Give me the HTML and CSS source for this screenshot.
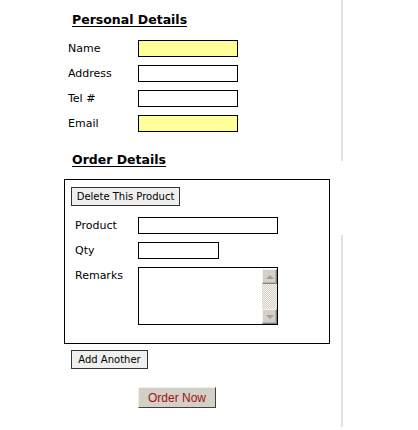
FILE: index.html
```html
<!DOCTYPE html>
<html>
<head>
<meta charset="utf-8">
<link rel="stylesheet" href="styles.css">
</head>
<body>
<div class="page">
  <main class="content">
    <h2 class="heading">Personal Details</h2>
    <div class="rows personal-rows">
      <div class="row"><label class="lbl">Name</label><input class="field req" type="text"></div>
      <div class="row"><label class="lbl">Address</label><input class="field" type="text"></div>
      <div class="row"><label class="lbl">Tel #</label><input class="field" type="text"></div>
      <div class="row"><label class="lbl">Email</label><input class="field req" type="text"></div>
    </div>

    <h2 class="heading order-heading">Order Details</h2>
    <div class="product-box">
      <button class="btn del-btn" type="button">Delete This Product</button>
      <div class="rows product-rows">
        <div class="row"><label class="lbl lbl-p">Product</label><input class="field wide" type="text"></div>
        <div class="row"><label class="lbl lbl-p">Qty</label><input class="field qty" type="text"></div>
        <div class="row row-top"><label class="lbl lbl-p lbl-top">Remarks</label>
          <div class="memo">
            <textarea class="memo-text"></textarea>
            <div class="sbar">
              <span class="sbtn"><span class="arr up"></span></span>
              <span class="strack"></span>
              <span class="sbtn"><span class="arr down"></span></span>
            </div>
          </div>
        </div>
      </div>
    </div>
    <button class="btn add-btn" type="button">Add Another</button>
    <div class="submit-row"><button class="order-btn" type="button">Order Now</button></div>
  </main>
  <div class="rule"><span class="seg seg-top"></span><span class="seg seg-bottom"></span></div>
</div>
</body>
</html>
```

FILE: styles.css
```css
html, body {
  margin: 0;
  padding: 0;
  background: #ffffff;
}
body {
  font-family: "DejaVu Sans", Verdana, sans-serif;
  font-size: 11px;
  color: #000;
}
.page {
  display: flex;
  width: 418px;
  height: 430px;
}
.content {
  width: 341px;
  padding-left: 64px;
  box-sizing: border-box;
  display: flex;
  flex-direction: column;
  align-items: flex-start;
}
.heading {
  margin: 12px 0 0 8px;
  font-size: 12.5px;
  line-height: 16px;
  font-weight: bold;
  text-decoration: underline;
  text-underline-offset: 2px;
}
.order-heading {
  margin-top: 20px;
}
.rows {
  display: flex;
  flex-direction: column;
  gap: 8px;
}
.personal-rows {
  margin: 12px 0 0 4px;
}
.row {
  display: flex;
  align-items: center;
  height: 17px;
}
.row-top {
  align-items: flex-start;
  height: auto;
}
.lbl {
  width: 70px;
  line-height: 14px;
}
.lbl-p {
  width: 63px;
  margin-left: 4px;
}
.lbl-top {
  padding-top: 2px;
}
.field {
  width: 100px;
  height: 17px;
  box-sizing: border-box;
  border: 1px solid #000;
  background: #fff;
  margin: 0;
  padding: 0 2px;
  font: inherit;
  outline: none;
}
.field.req {
  background: #ffff99;
}
.field.wide {
  width: 140px;
}
.field.qty {
  width: 81px;
}
.product-box {
  margin-top: 11px;
  width: 266px;
  height: 165px;
  box-sizing: border-box;
  border: 1px solid #000;
  padding: 7px 0 0 6px;
}
.btn {
  height: 19px;
  box-sizing: border-box;
  border: 1px solid #333;
  background: #efefef;
  font-family: "DejaVu Sans", Verdana, sans-serif;
  font-size: 10px;
  color: #000;
  padding: 0 4px;
  margin: 0;
  line-height: 17px;
}
.del-btn {
  width: 109px;
  padding: 0;
}
.product-rows {
  margin-top: 11px;
}
.memo {
  width: 140px;
  height: 58px;
  box-sizing: border-box;
  border: 1px solid #000;
  display: flex;
  background: #fff;
}
.memo-text {
  flex: 1;
  border: none;
  margin: 0;
  padding: 0;
  resize: none;
  outline: none;
  overflow: hidden;
  background: #fff;
}
.sbar {
  width: 15px;
  display: flex;
  flex-direction: column;
  margin-top: 1px;
}
.sbtn {
  height: 15px;
  box-sizing: border-box;
  background: #d4d0c8;
  border-top: 1px solid #f4f3ee;
  border-left: 1px solid #f4f3ee;
  border-right: 1px solid #808080;
  border-bottom: 1px solid #808080;
  box-shadow: inset -1px -1px 0 #b8b4ac;
  display: flex;
  align-items: center;
  justify-content: center;
}
.strack {
  flex: 1;
  background-color: #f4f3ee;
  background-image: repeating-conic-gradient(#d4d0c8 0 25%, #f4f3ee 0 50%);
  background-size: 2px 2px;
}
.arr {
  width: 0;
  height: 0;
  border-left: 4px solid transparent;
  border-right: 4px solid transparent;
}
.arr.up {
  border-bottom: 4px solid #a0a0a0;
}
.arr.down {
  border-top: 4px solid #a0a0a0;
}
.add-btn {
  margin: 6px 0 0 7px;
  width: 77px;
  padding: 0;
}
.submit-row {
  margin: 18px 0 0 74px;
}
.order-btn {
  width: 78px;
  height: 21px;
  box-sizing: border-box;
  background: #d4d0c8;
  border-top: 1px solid #f0efea;
  border-left: 1px solid #f0efea;
  border-right: 1px solid #404040;
  border-bottom: 1px solid #404040;
  font-family: "Liberation Sans", Arial, sans-serif;
  font-size: 12px;
  color: #9a1414;
  padding: 0;
  margin: 0;
}
.rule {
  width: 2px;
  display: flex;
  flex-direction: column;
}
.seg {
  display: block;
  background: #e2e2e2;
  width: 2px;
}
.seg-top {
  height: 161px;
}
.seg-bottom {
  margin-top: 74px;
  height: 192px;
}
```
